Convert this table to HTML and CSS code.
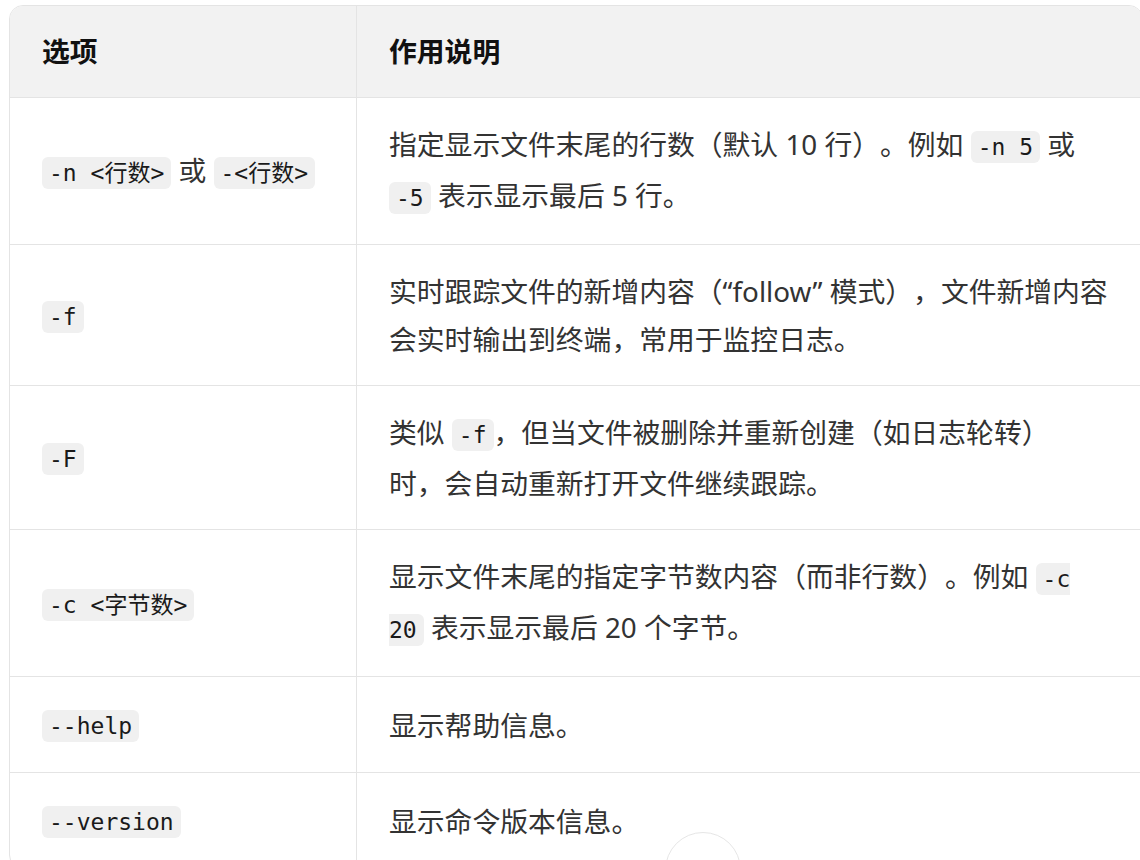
FILE: index.html
```html
<!DOCTYPE html>
<html lang="zh-CN">
<head>
<meta charset="utf-8">
<title>tail 选项</title>
<link rel="stylesheet" href="styles.css">
</head>
<body>
<div class="page">
  <div class="table-wrap">
    <table class="opts">
      <thead>
        <tr><th class="col-opt">选项</th><th class="col-desc">作用说明</th></tr>
      </thead>
      <tbody>
        <tr>
          <td class="col-opt"><code>-n &lt;行数&gt;</code> 或 <code>-&lt;行数&gt;</code></td>
          <td class="col-desc">指定显示文件末尾的行数（默认 10 行）。例如 <code>-n 5</code> 或 <code>-5</code> 表示显示最后 5 行。</td>
        </tr>
        <tr>
          <td class="col-opt"><code>-f</code></td>
          <td class="col-desc">实时跟踪文件的新增内容（“follow” 模式），文件新增内容会实时输出到终端，常用于监控日志。</td>
        </tr>
        <tr>
          <td class="col-opt"><code>-F</code></td>
          <td class="col-desc">类似 <code>-f</code>，但当文件被删除并重新创建（如日志轮转）<br>时，会自动重新打开文件继续跟踪。</td>
        </tr>
        <tr>
          <td class="col-opt"><code>-c &lt;字节数&gt;</code></td>
          <td class="col-desc">显示文件末尾的指定字节数内容（而非行数）。例如 <code>-c 20</code> 表示显示最后 20 个字节。</td>
        </tr>
        <tr>
          <td class="col-opt"><code>--help</code></td>
          <td class="col-desc">显示帮助信息。</td>
        </tr>
        <tr>
          <td class="col-opt"><code>--version</code></td>
          <td class="col-desc">显示命令版本信息。</td>
        </tr>
      </tbody>
    </table>
  </div>
  <button class="scroll-btn" aria-label="scroll down"></button>
</div>
</body>
</html>
```
FILE: styles.css
```css
html, body {
  margin: 0;
  padding: 0;
  background: #ffffff;
}

body {
  font-family: "Noto Sans", "Noto Sans CJK SC", sans-serif;
  color: #333333;
  overflow: hidden;
}

.page {
  position: relative;
  padding: 5px 0 0 9px;
  height: 860px;
  box-sizing: border-box;
}

.table-wrap {
  width: 1132px;
  border: 1px solid #e4e4e4;
  border-radius: 14px;
  overflow: hidden;
}

.opts {
  width: 100%;
  border-collapse: separate;
  border-spacing: 0;
  table-layout: fixed;
  font-size: 27.8px;
  line-height: 48px;
  text-spacing-trim: space-all;
}

.opts th,
.opts td {
  text-align: left;
  vertical-align: middle;
  border-bottom: 1px solid #e4e4e4;
  padding: 22px 32px;
}

.opts th {
  background: #f2f2f2;
  color: #111111;
  font-weight: 700;
  padding: 21px 32px 22px;
}

.opts .col-opt {
  width: 347px;
  box-sizing: border-box;
  border-right: 1px solid #e4e4e4;
}

.opts .col-desc {
  padding-left: 32px;
  padding-right: 30px;
}

.opts tbody tr:last-child td {
  border-bottom: none;
}

code {
  font-family: "DejaVu Sans Mono", "Noto Sans CJK SC", monospace;
  font-size: 23px;
  background: #f0f0f0;
  color: #1a1a1a;
  border-radius: 6px;
  padding: 3px 7px;
}

.scroll-btn {
  position: absolute;
  left: 665px;
  top: 832px;
  width: 76px;
  height: 76px;
  border-radius: 50%;
  border: 1px solid #e6e6e6;
  background: #ffffff;
  padding: 0;
}
```
